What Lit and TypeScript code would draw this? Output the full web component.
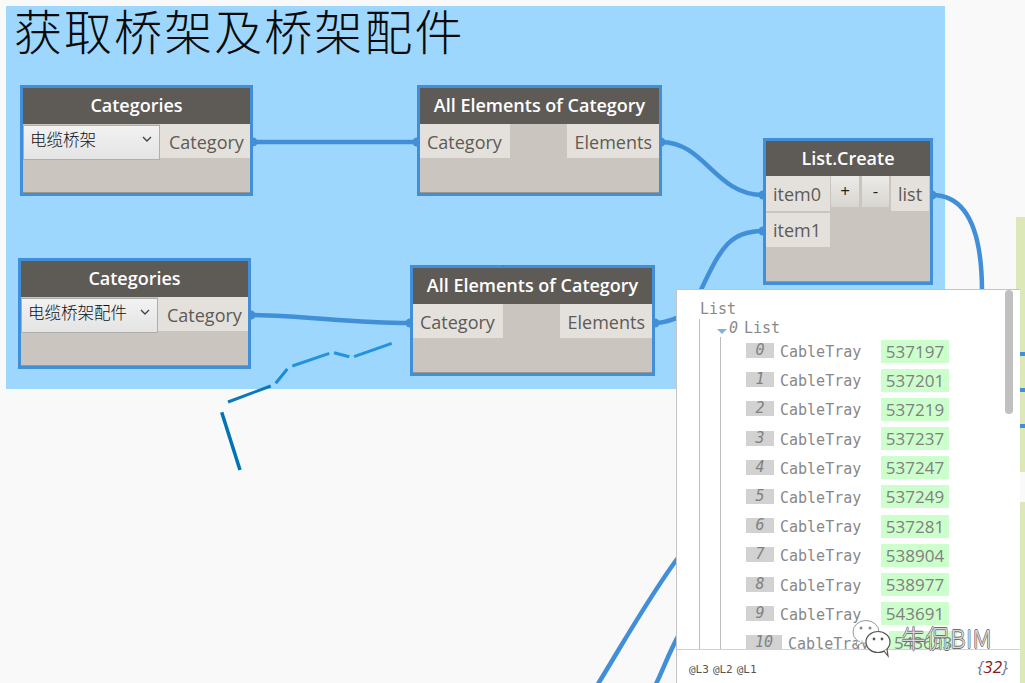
import { LitElement, html, css, svg } from "lit";
import { customElement } from "lit/decorators.js";

const rows: [string, string][] = [
  ["0", "537197"], ["1", "537201"], ["2", "537219"], ["3", "537237"], ["4", "537247"],
  ["5", "537249"], ["6", "537281"], ["7", "538904"], ["8", "538977"], ["9", "543691"], ["10", "543693"],
];

type NodeDef = { x: number; y: number; w: number; h: number; title: string; kind: "cat" | "all"; option?: string };
const nodes: NodeDef[] = [
  { x: 20, y: 85, w: 233, h: 111, title: "Categories", kind: "cat", option: "电缆桥架" },
  { x: 417, y: 85, w: 245, h: 111, title: "All Elements of Category", kind: "all" },
  { x: 18, y: 258, w: 233, h: 111, title: "Categories", kind: "cat", option: "电缆桥架配件" },
  { x: 410, y: 265, w: 245, h: 111, title: "All Elements of Category", kind: "all" },
];

const wires = [
  "M253 142 L417 142",
  "M661 142 C 705 142, 715 195, 763 195",
  "M251 315 C 310 316, 350 323, 410 323",
  "M655 323 C 665 323, 670 320, 680 317",
  "M763 231 C 730 232, 722 245, 700 292",
  "M932 195 C 968 195, 982 232, 982 292",
  "M680 555 C 650 595, 625 640, 598 684",
  "M680 633 C 670 650, 665 665, 656 684",
];
const dots = [[253, 142], [417, 142], [661, 142], [763, 195], [251, 315], [410, 323], [655, 323], [763, 231], [932, 195]];

@customElement("app-root")
export class AppRoot extends LitElement {
  static styles = css`
    :host { display: block; width: 1025px; height: 683px; }
    .canvas { position: relative; width: 1025px; height: 683px; overflow: hidden; background: #f9f9f9; font-family: "Open Sans", sans-serif; }
    .group { position: absolute; left: 6px; top: 6px; width: 939px; height: 383px; background: #9ed7fd; box-sizing: border-box; padding: 0 0 0 8px; }
    .title { margin: -10px 0 0; font: 300 48px/66px "Noto Sans CJK SC", sans-serif; letter-spacing: 2.05px; color: #0a0a0a; white-space: nowrap; }
    .green { position: absolute; left: 1016px; width: 9px; background: #dde8b9; }
    .g1 { top: 217px; height: 255px; }
    .g2 { top: 502px; height: 181px; }
    .tick { position: absolute; left: 1020px; width: 5px; height: 4px; background: #3f90da; }
    .t1 { top: 352px; } .t2 { top: 388px; } .t3 { top: 424px; }
    .wires { position: absolute; inset: 0; width: 1025px; height: 683px; }
    .node { position: absolute; box-sizing: border-box; border: 3px solid #418fd8; background: #cac6bf; display: flex; flex-direction: column; }
    .node::after { content: ""; margin-top: auto; height: 1px; background: #99958f; }
    .head { height: 36px; flex: none; background: #5e5a56; color: #fff; font-weight: 600; font-size: 18px; line-height: 35px; text-align: center; }
    .ports { display: flex; justify-content: space-between; align-items: flex-start; }
    .port { height: 34px; background: #e4e1dc; color: #5e5a56; font-size: 18px; line-height: 37px; box-sizing: border-box; padding: 0 7px; flex: none; }
    .port.cat { width: 90px; }
    .select + .port.cat { padding-left: 9px; }
    .port.el { width: 92px; padding-right: 7px; text-align: right; }
    .select { width: 137px; height: 35px; box-sizing: border-box; margin-top: 1px; border: 1px solid #aeaeae; background: linear-gradient(#f2f2f2, #e4e4e4); font: 300 16.5px/26px "Noto Sans CJK SC", sans-serif; color: #111; padding: 0 0 7px 6px; display: flex; justify-content: space-between; align-items: center; }
    .select svg { margin-right: 7px; flex: none; }
    .lc { position: absolute; left: 763px; top: 138px; width: 170px; height: 147px; box-sizing: border-box; border: 3px solid #418fd8; background: #cac6bf; display: flex; flex-direction: column; }
    .lc::after { content: ""; margin-top: auto; height: 1px; background: #99958f; }
    .lc .head { height: 35px; }
    .lc-body { display: flex; align-items: flex-start; }
    .items { display: flex; flex-direction: column; gap: 2px; width: 64px; flex: none; }
    .items .port { height: 35px; }
    .items .port + .port { height: 34px; line-height: 35px; }
    .btn { width: 28px; height: 31px; margin-left: 1px; flex: none; background: linear-gradient(#ecebe8, #d8d5d0); color: #222; text-align: center; font-size: 17px; line-height: 29px; }
    .btn + .btn { margin-left: 3px; width: 27px; }
    .lc .list { width: 38px; height: 35px; margin-left: 2px; }
    .watch { position: absolute; left: 676px; top: 289px; width: 344px; height: 394px; box-sizing: border-box; background: #fff; border: 1px solid #c4c4c4; border-width: 1.5px 0 0 1.5px; display: flex; flex-direction: column; }
    .tree { flex: 1; min-height: 0; overflow: hidden; position: relative; font: 15px/18px "DejaVu Sans Mono", monospace; color: #888; padding: 10px 0 0 22px; }
    .root { margin-left: 1px; }
    .level { border-left: 1px solid #bdbdbd; margin-top: 1px; padding: 0 0 0 20px; height: 400px; }
    .sub { display: flex; align-items: center; margin-left: -3px; height: 18px; }
    .tri { width: 0; height: 0; border: 5px solid transparent; border-top: 5px solid #7fb1de; border-bottom: 0; margin: 6px 2px 0 0; flex: none; }
    .sub i { margin-right: 6px; }
    .level2 { border-left: 1px solid #bdbdbd; margin: 0; padding: 3px 0 0 25px; height: 360px; display: flex; flex-direction: column; gap: 7.2px; }
    .row { display: flex; align-items: center; height: 22px; flex: none; }
    .idx { min-width: 28px; padding: 0 9px; box-sizing: border-box; height: 15px; background: #d2d2d2; font-style: italic; text-align: center; line-height: 15px; margin-top: -1px; color: #808080; }
    .type { margin: 2px 0 0 6px; width: 101px; flex: none; }
    .val { font: 17px/23px "Open Sans", sans-serif; background: #ccffcc; color: #808080; width: 68px; text-align: center; flex: none; }
    .foot { height: 33px; flex: none; border-top: 1.5px solid #d2d2d2; display: flex; justify-content: space-between; align-items: center; padding: 0 12px 0 12px; }
    .levels { font: 11px "DejaVu Sans Mono", monospace; color: #555; display: flex; gap: 4px; margin-top: 5px; }
    .count { font: italic 17px "Open Sans", sans-serif; color: #6d7a92; }
    .count b { font-weight: 400; color: #8b1a1a; }
    .thumb { position: absolute; left: 1005px; top: 290px; width: 8px; height: 124px; border-radius: 4px; background: #c0c0c0; }
    .mark { position: absolute; left: 851px; top: 619px; display: flex; align-items: flex-start; gap: 6px; }
    .mark span { font: 300 24.5px/28px "Noto Sans CJK SC", sans-serif; color: rgba(255,255,255,.75); margin-top: 5px; text-shadow: .6px 0 0 #6e6e6e, -.6px 0 0 #6e6e6e, 0 .6px 0 #6e6e6e, 0 -.6px 0 #6e6e6e; }
    .draw { position: absolute; inset: 0; width: 1025px; height: 683px; }
  `;

  private chevron() {
    return html`<svg width="10" height="6" viewBox="0 0 10 6"><path d="M1 1 L5 5 L9 1" fill="none" stroke="#444" stroke-width="1.4"/></svg>`;
  }

  private renderNode(n: NodeDef) {
    return html`<div class="node" style="left:${n.x}px;top:${n.y}px;width:${n.w}px;height:${n.h}px">
      <div class="head">${n.title}</div>
      <div class="ports">
        ${n.kind === "cat"
          ? html`<div class="select">${n.option}${this.chevron()}</div><div class="port cat">Category</div>`
          : html`<div class="port cat">Category</div><div class="port el">Elements</div>`}
      </div>
    </div>`;
  }

  render() {
    return html`<div class="canvas">
      <div class="group"><h1 class="title">获取桥架及桥架配件</h1></div>
      <div class="green g1"></div>
      <div class="green g2"></div>
      <div class="tick t1"></div><div class="tick t2"></div><div class="tick t3"></div>
      <svg class="wires" viewBox="0 0 1025 683">
        ${wires.map((d) => svg`<path d=${d} fill="none" stroke="#418fd8" stroke-width="4.5"/>`)}
        ${dots.map(([x, y]) => svg`<circle cx=${x} cy=${y} r="4.5" fill="#418fd8"/>`)}
      </svg>
      ${nodes.map((n) => this.renderNode(n))}
      <div class="lc">
        <div class="head">List.Create</div>
        <div class="lc-body">
          <div class="items"><div class="port">item0</div><div class="port">item1</div></div>
          <div class="btn">+</div><div class="btn">-</div>
          <div class="port list">list</div>
        </div>
      </div>
      <svg class="draw" viewBox="0 0 1025 683">
        <g fill="none" stroke-width="3">
          <path d="M503 265 V267" stroke="#1e8fd8" stroke-width="1.5"/>
          <path d="M391.7 343.3 L354 356.7" stroke="#2294de"/>
          <path d="M349.3 356.7 L334 352.7" stroke="#2294de"/>
          <path d="M329.3 353.3 L292.3 366" stroke="#2294de"/>
          <path d="M287.3 369 L275.7 383.3" stroke="#1b8cd4"/>
          <path d="M270.7 386 L228 402" stroke="#0b78bb"/>
          <path d="M221.7 412.3 L240 470" stroke="#0075b5" stroke-width="3.5"/>
        </g>
      </svg>
      <div class="watch">
        <div class="tree">
          <div class="root">List</div>
          <div class="level">
            <div class="sub"><span class="tri"></span><i>0</i>List</div>
            <div class="level2">
              ${rows.map(([i, v]) => html`<div class="row">
                <span class="idx">${i}</span><span class="type">CableTray</span><span class="val">${v}</span>
              </div>`)}
            </div>
          </div>
        </div>
        <div class="foot">
          <div class="levels"><span>@L3</span><span>@L2</span><span>@L1</span></div>
          <div class="count">{<b>32</b>}</div>
        </div>
      </div>
      <div class="thumb"></div>
      <div class="mark">
        <svg width="44" height="40" viewBox="0 0 44 40">
          <ellipse cx="15" cy="13" rx="13" ry="11.5" fill="rgba(255,255,255,.65)" stroke="#999" stroke-width="1"/>
          <path d="M6 22 L5 27 L11 24" fill="#fff" stroke="#999" stroke-width="1"/>
          <circle cx="10" cy="9" r="1.5" fill="#888"/><circle cx="19" cy="9" r="1.5" fill="#888"/>
          <ellipse cx="27" cy="23" rx="12" ry="10.5" fill="#fff" stroke="#555" stroke-width="1.2"/>
          <path d="M33 32 L37 37 L36 30" fill="#fff" stroke="#555" stroke-width="1.2"/>
          <circle cx="23" cy="20" r="1.4" fill="#555"/><circle cx="31" cy="20" r="1.4" fill="#555"/>
        </svg>
        <span>牛侃BIM</span>
      </div>
    </div>`;
  }
}
